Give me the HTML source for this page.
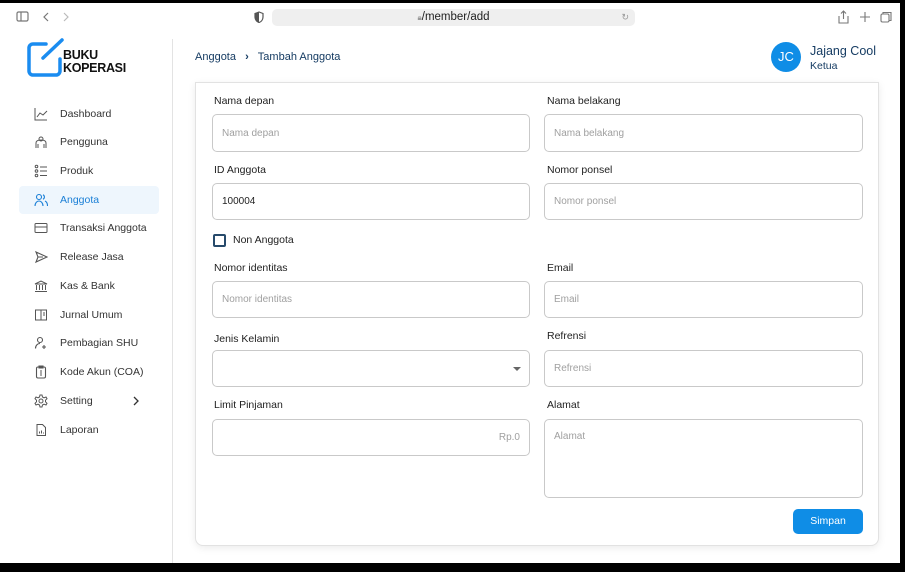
<!DOCTYPE html>
<html><head><meta charset="utf-8"><style>
*{box-sizing:border-box;margin:0;padding:0}
body{width:905px;height:572px;background:#000;font-family:"Liberation Sans",sans-serif;position:relative;overflow:hidden;color:#222}
.win{position:absolute;left:0;top:0;width:900px;height:563px;background:#fff;overflow:hidden}
.a{position:absolute}
.lab{position:absolute;font-size:10.5px;color:#222}
.inp{position:absolute;border:1px solid #c9c9c9;border-radius:5px;background:#fff;font-size:10px;color:#a0a0a0;padding-left:9px;display:flex;align-items:center}
.nav{position:absolute;left:19px;width:140px;height:28px;display:flex;align-items:center;font-size:10.5px;color:#333}
.nav svg{position:absolute;left:15px}
.nav span{position:absolute;left:41px}
</style></head><body>
<div class="win">
<div class="a" style="left:0;top:0;width:905px;height:3px;background:#000"></div>
<!-- toolbar -->
<svg class="a" style="left:16px;top:10px" width="60" height="14" viewBox="0 0 60 14" fill="none" stroke="#777" stroke-width="1.2"><rect x="1" y="2" width="11" height="9" rx="1.5"/><line x1="5" y1="2" x2="5" y2="11"/><path d="M32 3l-4 4 4 4"/><path d="M48 3l4 4-4 4" stroke="#bbb"/></svg>
<svg class="a" style="left:254px;top:11px" width="10" height="12" viewBox="0 0 10 12"><path d="M5 1L1 2.5v3.5c0 3 2 5 4 5.5 2-.5 4-2.5 4-5.5V2.5z" fill="none" stroke="#555" stroke-width="1.2"/><path d="M5 1L1 2.5v3.5c0 3 2 5 4 5.5z" fill="#555"/></svg>
<div class="a" style="left:272px;top:9px;width:363px;height:17px;background:#efefef;border-radius:5px;font-size:11.5px;color:#222;text-align:center;line-height:17px"><span style="color:#999;font-size:8px">🔒︎</span>/member/add<span class="a" style="right:6px;top:0;color:#999;font-size:9px">↻</span></div>
<svg class="a" style="left:836px;top:10px" width="58" height="14" viewBox="0 0 58 14" fill="none" stroke="#777" stroke-width="1.1"><path d="M3 6v7h9V6M7.5 1v8M5 3.5l2.5-2.5 2.5 2.5"/><path d="M29 2v10M24 7h10"/><rect x="45" y="4" width="8" height="8" rx="1.5"/><path d="M47 4V2.5h8v8h-2"/></svg>
<!-- sidebar -->
<div class="a" style="left:172px;top:39px;width:1px;height:530px;background:#e3e3e3"></div>
<svg class="a" style="left:26px;top:37px" width="40" height="42" viewBox="0 0 40 42" fill="none" stroke="#1a8cf0" stroke-linecap="round"><path d="M20 7H7a4 4 0 0 0-4 4v23a4 4 0 0 0 4 4h23a4 4 0 0 0 4-4V22" stroke-width="3.5"/><path d="M17 21L36 3" stroke-width="3.5"/></svg>
<div class="a" style="left:63px;top:49px;font-size:12.5px;font-weight:bold;line-height:13px;color:#111;letter-spacing:-.3px">BUKU<br>KOPERASI</div>
<div class="nav" style="top:100px"><svg width="14" height="14" viewBox="0 0 14 14" fill="none" stroke="#555" stroke-width="1"><path d="M1 1v12h12M3 10l3-4 3 2 4-4"/></svg><span>Dashboard</span></div>
<div class="nav" style="top:128px"><svg width="14" height="14" viewBox="0 0 14 14" fill="none" stroke="#555" stroke-width="1"><circle cx="7" cy="4" r="2"/><path d="M2 13V8c0-2 2-3 5-3s5 1 5 3v5M4 13v-4M10 13v-4"/></svg><span>Pengguna</span></div>
<div class="nav" style="top:157px"><svg width="14" height="14" viewBox="0 0 14 14" fill="none" stroke="#555" stroke-width="1"><circle cx="2.5" cy="2.5" r="1.3"/><circle cx="2.5" cy="7" r="1.3"/><circle cx="2.5" cy="11.5" r="1.3"/><path d="M6 3h7M6 7h7M6 11.5h7"/></svg><span>Produk</span></div>
<div class="nav" style="top:186px;background:#eef6fd;border-radius:4px;color:#1a7fd6"><svg width="14" height="14" viewBox="0 0 14 14" fill="none" stroke="#1a7fd6" stroke-width="1.1"><circle cx="5" cy="4" r="2.5"/><path d="M1 13c0-3 2-5 4-5s4 2 4 5M9 1.8a2.5 2.5 0 0 1 0 4.5M11 8c1.5.7 2.5 2.5 2.5 5"/></svg><span>Anggota</span></div>
<div class="nav" style="top:214px"><svg width="14" height="14" viewBox="0 0 14 14" fill="none" stroke="#555" stroke-width="1"><rect x="1" y="2.5" width="12" height="9" rx="1"/><path d="M1 6h12"/></svg><span>Transaksi Anggota</span></div>
<div class="nav" style="top:243px"><svg width="14" height="14" viewBox="0 0 14 14" fill="none" stroke="#555" stroke-width="1.1"><path d="M2 2l11 5-11 5 2-5zM4 7h5"/></svg><span>Release Jasa</span></div>
<div class="nav" style="top:272px"><svg width="14" height="14" viewBox="0 0 14 14" fill="none" stroke="#555" stroke-width="1"><path d="M1 5l6-3 6 3zM2.5 6v5M5.5 6v5M8.5 6v5M11.5 6v5M1 12.5h12"/></svg><span>Kas &amp; Bank</span></div>
<div class="nav" style="top:301px"><svg width="14" height="14" viewBox="0 0 14 14" fill="none" stroke="#555" stroke-width="1"><rect x="1.5" y="2" width="11" height="10"/><path d="M7 2v10M9 5h2M9 7h2"/></svg><span>Jurnal Umum</span></div>
<div class="nav" style="top:329px"><svg width="14" height="14" viewBox="0 0 14 14" fill="none" stroke="#555" stroke-width="1.1"><circle cx="6" cy="4" r="2.5"/><path d="M1.5 12.5c0-3 2-5 4.5-5M10 9v4M8 11h4"/></svg><span>Pembagian SHU</span></div>
<div class="nav" style="top:358px"><svg width="14" height="14" viewBox="0 0 14 14" fill="none" stroke="#555" stroke-width="1.1"><rect x="2.5" y="2" width="9" height="11" rx="1.5"/><path d="M5 1h4v2H5zM6 6h2M6 8h2M6 10h2"/></svg><span>Kode Akun (COA)</span></div>
<div class="nav" style="top:387px"><svg width="14" height="14" viewBox="0 0 14 14" fill="none" stroke="#555" stroke-width="1"><circle cx="7" cy="7" r="2"/><path d="M6 1h2l.5 2 1.5.8 2-.8 1 1.7-1.5 1.5v1.6l1.5 1.5-1 1.7-2-.8-1.5.8L8 13H6l-.5-2-1.5-.8-2 .8-1-1.7L2.5 7.8V6.2L1 4.7l1-1.7 2 .8 1.5-.8z"/></svg><span>Setting</span><svg style="left:113px" width="8" height="10" viewBox="0 0 8 10" fill="none" stroke="#333" stroke-width="1.3"><path d="M2 1l4 4-4 4"/></svg></div>
<div class="nav" style="top:416px"><svg width="14" height="14" viewBox="0 0 14 14" fill="none" stroke="#555" stroke-width="1"><path d="M3 1.5h5.5l3 3v8H3zM5.5 10.5v-2M7.5 10.5v-3M9.5 10.5v-1"/></svg><span>Laporan</span></div>
<!-- header -->
<div class="a" style="left:195px;top:51px;font-size:11px;color:#163c63">Anggota &nbsp; <b style="font-weight:bold">›</b> &nbsp; Tambah Anggota</div>
<div class="a" style="left:771px;top:42px;width:30px;height:30px;border-radius:50%;background:#0f8de6;color:#fff;font-size:13px;text-align:center;line-height:30px">JC</div>
<div class="a" style="left:810px;top:44px;font-size:12.5px;color:#163c63">Jajang Cool</div>
<div class="a" style="left:810px;top:60px;font-size:10.5px;color:#163c63">Ketua</div>
<!-- card -->
<div class="a" style="left:195px;top:82px;width:684px;height:464px;border:1px solid #e2e2e2;border-radius:0 0 8px 8px;box-shadow:0 2px 8px rgba(0,0,0,.08);background:#fff"></div>
<div class="lab" style="left:214px;top:95px">Nama depan</div><div class="inp" style="left:212px;top:114px;width:318px;height:38px">Nama depan</div>
<div class="lab" style="left:547px;top:95px">Nama belakang</div><div class="inp" style="left:544px;top:114px;width:319px;height:38px">Nama belakang</div>
<div class="lab" style="left:214px;top:164px">ID Anggota</div><div class="inp" style="left:212px;top:183px;width:318px;height:37px;color:#222">100004</div>
<div class="lab" style="left:547px;top:164px">Nomor ponsel</div><div class="inp" style="left:544px;top:183px;width:319px;height:37px">Nomor ponsel</div>
<div class="a" style="left:213px;top:234px;width:13px;height:13px;border:2px solid #274a6b;border-radius:2px"></div><div class="lab" style="left:233px;top:234px">Non Anggota</div>
<div class="lab" style="left:214px;top:262px">Nomor identitas</div><div class="inp" style="left:212px;top:281px;width:318px;height:37px">Nomor identitas</div>
<div class="lab" style="left:547px;top:262px">Email</div><div class="inp" style="left:544px;top:281px;width:319px;height:37px">Email</div>
<div class="lab" style="left:214px;top:333px">Jenis Kelamin</div><div class="inp" style="left:212px;top:350px;width:318px;height:37px"><span class="a" style="right:8px;top:16px;width:0;height:0;border-left:4px solid transparent;border-right:4px solid transparent;border-top:4px solid #666"></span></div>
<div class="lab" style="left:547px;top:330px">Refrensi</div><div class="inp" style="left:544px;top:350px;width:319px;height:37px">Refrensi</div>
<div class="lab" style="left:214px;top:399px">Limit Pinjaman</div><div class="inp" style="left:212px;top:419px;width:318px;height:37px;justify-content:flex-end;padding-right:9px">Rp.0</div>
<div class="lab" style="left:547px;top:399px">Alamat</div><div class="inp" style="left:544px;top:419px;width:319px;height:79px;align-items:flex-start;padding-top:11px">Alamat</div>
<div class="a" style="left:793px;top:509px;width:70px;height:25px;background:#0f8de6;border-radius:5px;color:#fff;font-size:10.5px;text-align:center;line-height:25px">Simpan</div>
</div>
</body></html>
